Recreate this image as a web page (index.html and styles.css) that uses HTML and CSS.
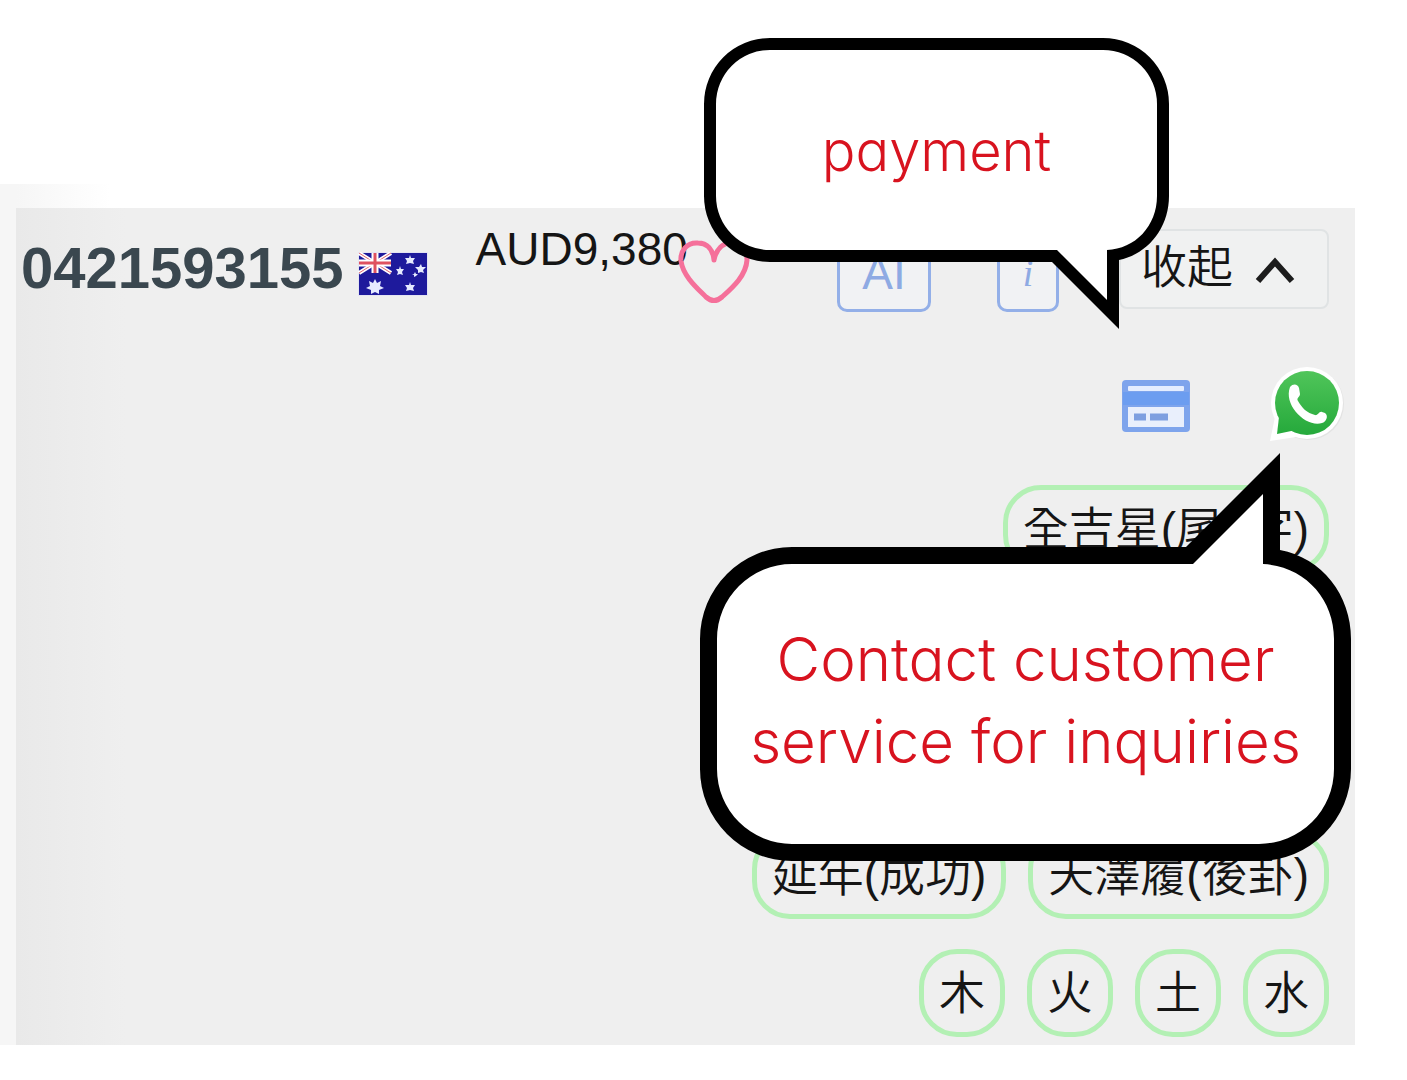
FILE: index.html
```html
<!DOCTYPE html>
<html lang="zh-Hant">
<head>
  <meta charset="utf-8">
  <meta name="viewport" content="width=device-width, initial-scale=1">
  <title>0421593155</title>
  <link rel="stylesheet" href="styles.css">
</head>
<body>
  <main class="sheet">
    <section class="listing">
      <header class="summary">
        <h1 class="number">0421593155</h1>
        <svg class="flag" viewBox="0 0 70 44" role="img" aria-label="Australia">
          <rect width="70" height="44" fill="#e4e4f2"/>
          <rect x="1" y="1" width="68" height="42" fill="#1e1a9c"/>
          <path d="M1 1L33 21M33 1L1 21" stroke="#fff" stroke-width="4"/>
          <path d="M1 1L33 21M33 1L1 21" stroke="#e0656f" stroke-width="1"/>
          <path d="M17 1V21M1 11H33" stroke="#fff" stroke-width="7"/>
          <path d="M17 1V21M1 11H33" stroke="#df5260" stroke-width="3"/>
          <g fill="#e6ebff">
            <path d="M17 27l2 4 4-2-1 5 4 2-5 2 0 4-4-2-4 2 0-4-5-2 4-2-1-5 4 2z"/>
            <path d="M52 3l1 3 4 0-2 3 1 3-4-1-4 1 1-3-2-3 4 0z"/>
            <path d="M42 14l1 3 3 0-2 3 1 3-3-1-3 1 1-3-2-3 3 0z"/>
            <path d="M63 12l1 3 4 0-3 3 1 3-3-1-3 1 0-3-3-3 4 0z"/>
            <path d="M52 30l1 3 4 0-2 3 1 3-4-1-4 1 1-3-2-3 4 0z"/>
            <path d="M57 20l1 2 2 0-2 2-2 1 0-2-2-1 2 0z"/>
          </g>
        </svg>
        <span class="price">AUD9,380</span>
        <button class="icon-button favourite" type="button" aria-label="Favourite">
          <svg width="72" height="66" viewBox="0 0 72 66" fill="none" stroke="#f5709a" stroke-width="5" stroke-linecap="round" stroke-linejoin="round">
            <path d="M36 21C35 10 29 4 20 4C9 3 2 12 3 22C5 37 19 49 28 58Q36 65 44 58C54 49 68 37 69 21C69 10 62 3 54 3C45 4 38 10 36 21"/>
          </svg>
        </button>
        <div class="actions">
          <button class="outline-button ai" type="button">AI</button>
          <button class="outline-button info" type="button">i</button>
          <button class="toggle" type="button">收起
            <svg width="40" height="28" viewBox="0 0 40 28" fill="none" stroke="#1c1c1c" stroke-width="6"><path d="M3 25L20 6L37 25"/></svg>
          </button>
        </div>
      </header>

      <div class="contact">
        <button class="icon-button" type="button" aria-label="Payment">
          <svg width="68" height="52" viewBox="0 0 68 52">
            <rect width="68" height="52" rx="4" fill="#7ea4ec"/>
            <rect x="1" y="12" width="66" height="13" fill="#6c9df0"/>
            <rect x="6" y="6" width="56" height="5" rx="1" fill="#e4edff"/>
            <rect x="6" y="27" width="56" height="20" fill="#e9effc"/>
            <path d="M12 37H24M28 37H46" stroke="#7e9fe0" stroke-width="7"/>
          </svg>
        </button>
        <a class="whatsapp" href="#whatsapp" aria-label="WhatsApp">
          <svg width="72" height="74" viewBox="0 0 72 74" overflow="visible">
            <defs><linearGradient id="green" gradientUnits="userSpaceOnUse" x1="0" y1="4" x2="0" y2="68"><stop offset="0" stop-color="#50c55a"/><stop offset="1" stop-color="#25a93b"/></linearGradient></defs>
            <g fill="#e3e3e3"><circle cx="38" cy="37" r="36"/></g>
            <g fill="#fff"><circle cx="37" cy="36" r="36"/><path d="M0 74L5 50L26 70Z"/></g>
            <g fill="url(#green)"><circle cx="37" cy="36" r="32"/><path d="M7 67L9 50L26 63Z"/></g>
            <path d="M20 20C23 16 28 17 29 21L30 27C30 30 26 31 28 34C32 41 37 46 45 48C48 49 49 44 52 45L55 46C59 49 56 55 52 56C37 61 13 39 20 20Z" fill="#fff"/>
          </svg>
        </a>
      </div>

      <ul class="tags">
        <li class="tag">全吉星(尾4字)</li>
      </ul>
      <ul class="tags tags-meaning">
        <li class="tag">延年(成功)</li>
        <li class="tag">天澤履(後卦)</li>
      </ul>
      <ul class="tags tags-element">
        <li class="tag">木</li>
        <li class="tag">火</li>
        <li class="tag">土</li>
        <li class="tag">水</li>
      </ul>

      <aside class="bubble bubble-payment">
        <svg class="bubble-shape" viewBox="0 0 465 291">
          <path d="M66 0H399A66 66 0 0 1 465 66V158C465 190 444 216 415 222V291L348 224H66A66 66 0 0 1 0 158V66A66 66 0 0 1 66 0Z"/>
          <path fill="#fff" d="M66 12H399A54 54 0 0 1 453 66V158C453 188 431 211 403 212V262L353 212H66A54 54 0 0 1 12 158V66A54 54 0 0 1 66 12Z"/>
        </svg>
        <p class="bubble-text">payment</p>
      </aside>

      <aside class="bubble bubble-contact">
        <svg class="bubble-shape" viewBox="0 0 651 408">
          <path d="M92 94H486L580 0V97C622 105 651 142 651 186V316A92 92 0 0 1 559 408H92A92 92 0 0 1 0 316V186A92 92 0 0 1 92 94Z"/>
          <path fill="#fff" d="M92 111H493L563 41V111C604 113 634 145 634 186V316A75 75 0 0 1 559 391H92A75 75 0 0 1 17 316V186A75 75 0 0 1 92 111Z"/>
        </svg>
        <p class="bubble-text">Contact customer service for inquiries</p>
      </aside>
    </section>
  </main>
</body>
</html>
```

FILE: styles.css
```css
* {
  box-sizing: border-box;
}

body {
  margin: 0;
  background: #fff;
  color: #151515;
  font-family: "Liberation Sans", "Noto Sans CJK TC", sans-serif;
  font-size: 46px;
  line-height: 56px;
}

button {
  font: inherit;
  color: inherit;
  cursor: pointer;
}

svg {
  display: block;
}

.sheet {
  margin: 184px 52px 35px 0;
  padding: 24px 0 0 16px;
  background: linear-gradient(90deg, #f6f6f6 16px, #fff 110px);
}

.listing {
  position: relative;
  padding: 21px 26px 8px 5px;
  background: linear-gradient(90deg, #e9e9e9, #efefef 110px);
}

.summary {
  display: flex;
  align-items: flex-start;
}

.number {
  margin: 7px 0 0;
  font-size: 58px;
  line-height: 64px;
  color: #3a474f;
}

.flag {
  width: 70px;
  height: 44px;
  margin: 23px 0 0 14px;
}

.price {
  margin: -8px 0 0 48px;
}

.icon-button {
  padding: 0;
  border: 0;
  background: none;
}

.favourite {
  margin: 10px 0 0 -10px;
}

.actions {
  display: flex;
  align-items: flex-start;
  margin-left: auto;
}

.outline-button {
  height: 83px;
  padding: 4px 0 0;
  border: 3px solid #93afe8;
  border-radius: 10px;
  background: #f1f2f4;
  color: #8eaae3;
}

.ai {
  width: 94px;
  margin-right: 66px;
}

.info {
  width: 62px;
  margin-right: 60px;
  font: italic 38px/56px "Liberation Serif", serif;
}

.toggle {
  display: flex;
  align-items: center;
  gap: 22px;
  height: 80px;
  padding: 0 32px 4px 20px;
  border: 2px solid #e0e3e4;
  border-radius: 8px;
  background: #f0f1f1;
  font-weight: 350;
}

.toggle svg {
  margin-top: 6px;
}

.contact {
  display: flex;
  align-items: center;
  justify-content: flex-end;
  gap: 80px;
  margin: 55px -13px 0 0;
}

.contact .icon-button {
  padding-top: 4px;
}

.tags {
  display: flex;
  justify-content: flex-end;
  gap: 22px;
  margin: 44px 0 0;
  padding: 0;
  list-style: none;
}

.tags-meaning {
  margin-top: 258px;
}

.tags-element {
  margin-top: 30px;
}

.tag {
  padding: 11px 15px;
  border: 5px solid #b3f0b4;
  border-radius: 38px;
  font-weight: 350;
}

.bubble {
  position: absolute;
  display: grid;
}

.bubble-shape,
.bubble-text {
  grid-area: 1 / 1;
}

.bubble-text {
  margin: 0;
  color: #d8131f;
  font-family: Inter, "Open Sans", sans-serif;
  font-feature-settings: "cv11";
  font-size: 56px;
  font-weight: 350;
  line-height: 82px;
  text-align: center;
}

.bubble-payment {
  top: -170px;
  right: 186px;
  width: 465px;
}

.bubble-payment .bubble-text {
  padding-top: 72px;
}

.bubble-contact {
  top: 245px;
  right: 4px;
  width: 651px;
}

.bubble-contact .bubble-text {
  padding: 165px 40px 0;
  font-size: 60px;
}
```
